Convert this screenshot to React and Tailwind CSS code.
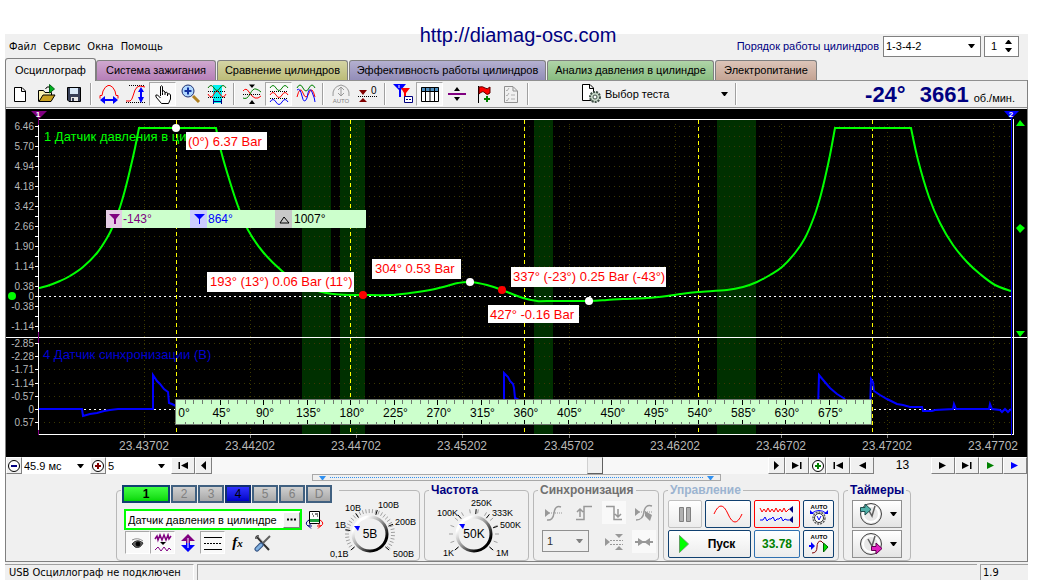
import React from "react";

const menuItems = ["Файл", "Сервис", "Окна", "Помощь"];

const tabs = [
    { title: "Система зажигания", color: "from-[#cfa8cf] to-[#b67fb8] w-[120px]" },
    { title: "Сравнение цилиндров", color: "from-[#d4d4a4] to-[#bcbc78] w-[131px]" },
    { title: "Эффективность работы цилиндров", color: "from-[#b4b0d0] to-[#938db8] w-[197px]" },
    { title: "Анализ давления в цилиндре", color: "from-[#b0d4a8] to-[#88bc80] w-[167px]" },
    { title: "Электропитание", color: "from-[#dcc4b8] to-[#c4a494] w-[102px]" },
];

// plot geometry: one degree of crankshaft is 174 / 180 px, zero is at x = 176
const ZERO_X = 176;
const DEG = 174 / 180;

const pressureTicks = [
    ["6.46", 126], ["5.70", 146], ["4.94", 166], ["4.18", 186], ["3.42", 206], ["2.66", 226],
    ["1.90", 246], ["1.14", 266], ["0.38", 286], ["0", 296], ["-0.38", 306], ["-1.14", 326],
];

const syncTicks = [
    ["-2.85", 343], ["-2.28", 356], ["-1.71", 369], ["-1.14", 383], ["-0.57", 396], ["0", 409], ["0.57", 422],
];

const timeTicks = [
    ["23.43702", 144], ["23.44202", 250], ["23.44702", 356], ["23.45202", 462], ["23.45702", 569],
    ["23.46202", 675], ["23.46702", 781], ["23.47202", 887], ["23.47702", 993],
];

const bands = [[302, 29], [340, 25], [534, 19], [717, 39]];

const pressure = [
    [[39, 288], [47, 286], [60, 281], [70, 276], [83, 267], [97, 253], [107, 238], [113, 226], [120, 207], [125, 190], [130, 170], [135, 148], [139, 128]],
    [[216, 128], [221, 151], [230, 182], [239, 209], [248, 230], [263, 252], [282, 271], [300, 284], [318, 291], [333, 294], [350, 295], [363, 295], [390, 295], [410, 293], [430, 290], [447, 286], [458, 283], [470, 282], [487, 285], [502, 290], [523, 298], [537, 301], [547, 301], [589, 301], [607, 300], [623, 299], [647, 298], [667, 296], [680, 294], [698, 292], [727, 290], [743, 287], [757, 282], [770, 275], [782, 267], [795, 253], [805, 238], [814, 217], [820, 198], [825, 178], [830, 155], [835, 128]],
    [[911, 128], [918, 160], [929, 197], [940, 223], [953, 245], [967, 262], [980, 274], [995, 285], [1011, 291]],
];

const syncSignal =
    "M39 409H82L83 416L90 414L97 413L104 411L110 410L118 409H153V375L157 381L160 384L164 389L168 392L169 403L172 404L176 406" +
    "M504 409V373L508 377L510 381L513 384L514 388L515 398L519 400" +
    "M818 409L819 375L824 381L830 388L837 394L845 399" +
    "M870 409L871 379L873 382L874 391L880 395L887 399L897 404L903 405L910 407H922L923 411H932L935 410L953 409L954 404L956 409H989L990 404L992 409L1000 410L1002 412L1005 409L1008 412L1011 409";

const notes = [
    { x: 186, y: 132, w: 81, h: 18, tx: 188, text: "(0°) 6.37 Bar" },
    { x: 207, y: 272, w: 147, h: 20, tx: 210, text: "193° (13°) 0.06 Bar (11°)" },
    { x: 372, y: 259, w: 89, h: 20, tx: 375, text: "304° 0.53 Bar" },
    { x: 511, y: 267, w: 155, h: 20, tx: 513, text: "337° (-23°) 0.25 Bar (-43°)" },
    { x: 488, y: 305, w: 91, h: 18, tx: 490, text: "427° -0.16 Bar" },
];

const points = [
    [176, 128, "#fff"], [363, 295, "#f00"], [470, 282, "#fff"], [502, 290, "#f00"], [589, 301, "#fff"],
];

// Catmull-Rom through the samples
function smooth(pts) {
    let d = `${pts[0][0]} ${pts[0][1]}`;
    for (let i = 0; i < pts.length - 1; i++) {
        const a = pts[i - 1] || pts[i];
        const b = pts[i];
        const c = pts[i + 1];
        const e = pts[i + 2] || c;
        d += `C${b[0] + (c[0] - a[0]) / 6} ${b[1] + (c[1] - a[1]) / 6} ${c[0] - (e[0] - b[0]) / 6} ${c[1] - (e[1] - b[1]) / 6} ${c[0]} ${c[1]}`;
    }
    return d;
}

function Chart() {
    const rows = [];
    for (let y = 126; y <= 326; y += 10) rows.push(y);
    const degrees = [];
    for (let d = 9; d < 720; d += 9) degrees.push(d);

    return (
        <svg viewBox="6 109 1021 348" className="block w-full bg-black" style={{ fontFamily: '"Liberation Sans", sans-serif' }}>
            {bands.map(([x, w]) => (
                <rect key={x} x={x} y="120" width={w} height="314" fill="#003000" />
            ))}

            <g shapeRendering="crispEdges" strokeDasharray="1 4" stroke="#3c3800">
                {[...rows, ...syncTicks.map(t => t[1])].filter(y => y !== 409 && y !== 296).map(y => (
                    <path key={y} d={`M44 ${y + 0.5}H1011`} />
                ))}
                {timeTicks.map(([label, x]) => (
                    <path key={label} d={`M${x + 0.5} 124V434`} strokeDasharray="1 3" />
                ))}
            </g>

            <text x="44" y="141" fontSize="13" fill="#00ff00">1 Датчик давления в ци</text>
            <text x="43" y="359" fontSize="13" fill="#0000d0">4 Датчик синхронизации (В)</text>

            <g fill="none" shapeRendering="crispEdges">
                <path d="M39 296.5H1011M39 409.5H1011" stroke="#fff" strokeDasharray="2 3" />
                <path d="M176.5 120V434M350.5 120V434M524.5 120V434M698.5 120V434M872.5 120V434" stroke="#ffff00" strokeDasharray="4 3" />
            </g>

            <path
                d={`M${smooth(pressure[0])}L${smooth(pressure[1])}L${smooth(pressure[2])}`}
                fill="none"
                stroke="#00ff00"
                strokeWidth="2"
            />
            <path d={syncSignal} fill="none" stroke="#0000ff" strokeWidth="2" />

            <g shapeRendering="crispEdges" stroke="#fff">
                <path d="M38 119.5H1011M38 434.5H1014M6 337.5H1027M38.5 119V435M1013.5 119V435" />
                <path d={rows.map(y => `M35 ${y + 0.5}h3`).join("") + syncTicks.map(t => `M35 ${t[1] + 0.5}h3`).join("")} />
                <path d={timeTicks.map(t => `M${t[1] + 0.5} 435v3`).join("")} stroke="#808080" />
                <path d="M38.5 117V125M38.5 332V343M38.5 430V435" stroke="#800080" />
                <path d="M1011.5 117V435" stroke="#0000ff" strokeWidth="1" />
            </g>

            <g fontSize="10" fill="#b8b8b8" textAnchor="end">
                {[...pressureTicks, ...syncTicks].map(([label, y]) => (
                    <text key={y} x="34" y={y + 4}>{label}</text>
                ))}
            </g>
            <g fontSize="12" fill="#b8b8b8" textAnchor="middle">
                {timeTicks.map(([label, x]) => (
                    <text key={label} x={x} y="450">{label}</text>
                ))}
            </g>

            {/* cursor flags */}
            <path d="M31 111H47L39 119Z" fill="#800080" />
            <path d="M1004 111H1019L1011 119Z" fill="#0000ff" />
            <g fontSize="8" fontWeight="bold" fill="#fff" textAnchor="middle">
                <text x="38" y="117">1</text>
                <text x="1011" y="117">2</text>
            </g>
            <path d="M1016 126H1025L1020 120ZM1016 331H1025L1020 337ZM1020 224L1025 228L1020 233L1016 228Z" fill="#00ff00" />
            <circle cx="12" cy="296" r="4" fill="#00ff00" />

            {/* cursor values */}
            <g fontSize="12">
                <rect x="106" y="210" width="260" height="18" fill="#ccffcc" />
                <rect x="106" y="210" width="16" height="18" fill="#e4cce4" />
                <rect x="190" y="210" width="17" height="18" fill="#ccccff" />
                <rect x="275" y="210" width="17" height="18" fill="#c8c8c8" />
                <path d="M109 214H120L116 219V224H114V219Z" fill="#800080" />
                <path d="M194 214H205L200 219V224H199V219Z" fill="#0000ff" />
                <path d="M280 223L284 217L289 223Z" fill="none" stroke="#000" />
                <text x="123" y="223" fill="#800080">-143°</text>
                <text x="208" y="223" fill="#0000ff">864°</text>
                <text x="294" y="223" fill="#000">1007°</text>
            </g>

            {/* crank angle ruler */}
            <rect x="175.5" y="399.5" width="696" height="25" fill="#ccffcc" stroke="#707870" />
            <g shapeRendering="crispEdges">
                {degrees.map(d => (
                    <path
                        key={d}
                        d={`M${Math.round(ZERO_X + d * DEG) + 0.5} 400V${d % 45 ? 404 : 405}m0 ${d % 45 ? 18 : 15}V424`}
                        stroke={d % 45 ? "#707870" : "#000"}
                    />
                ))}
            </g>
            <g fontSize="12" textAnchor="middle">
                <text x="184" y="417">0°</text>
                {degrees.filter(d => d % 45 === 0).map(d => (
                    <text key={d} x={ZERO_X + d * DEG + 2} y="417">{d}°</text>
                ))}
            </g>

            {points.map(([x, y, fill]) => (
                <circle key={x} cx={x} cy={y} r="4" fill={fill} />
            ))}
            {notes.map(n => (
                <g key={n.text}>
                    <rect x={n.x} y={n.y} width={n.w} height={n.h} fill="#fff" />
                    <text x={n.tx} y={n.y + 14} fontSize="13" fill="#ff0000">{n.text}</text>
                </g>
            ))}
        </svg>
    );
}

function Icon({ w = 22, h = 22, children }) {
    return (
        <svg width={w} height={h} viewBox={`0 0 ${w} ${h}`} fill="none" stroke="#000" className="shrink-0">
            {children}
        </svg>
    );
}

function ToolButton({ label, pressed, children }) {
    return (
        <button
            aria-label={label}
            className={`flex h-6 w-[27px] shrink-0 items-center justify-center ${
                pressed ? "border border-[#a8a8a8] border-r-white border-b-white bg-[#f9f9f9]" : ""
            }`}
        >
            {children}
        </button>
    );
}

function Separator() {
    return <div className="mx-[3px] h-[22px] w-0.5 shrink-0 border-l border-[#a0a0a0] bg-white" />;
}

function Caret() {
    return (
        <svg width="7" height="4" viewBox="0 0 7 4" className="pointer-events-none shrink-0">
            <path d="M0 0H7L4 4H3Z" fill="currentColor" />
        </svg>
    );
}

const wave = (y, up) => `M2 ${y}q3 ${up} 6 0t6 0t6 0`;

function Toolbar() {
    return (
        <div className="mb-px flex h-7 items-center border-t border-b border-[#909090]">
            <ToolButton label="Новый">
                <Icon>
                    <path d="M5.500 4.500H13L16.500 8V18.500H5.500ZM12.500 4.500V8.500H16.500" fill="#fff" />
                </Icon>
            </ToolButton>
            <ToolButton label="Открыть">
                <Icon>
                    <path d="M2.500 18.500V7.500H7.500L9 9.500H15.500V12" fill="#f8f0b0" />
                    <path d="M3 18.500L7 12H19L15 18.500Z" fill="#c8a020" />
                    <path d="M13.500 1.500V10L18.500 6Z" fill="#00b020" stroke="#006010" />
                    <path d="M9.500 6Q11 3 13 4" />
                </Icon>
            </ToolButton>
            <ToolButton label="Сохранить">
                <Icon>
                    <path d="M4.500 4.500H17.500V18.500H6L4.500 17Z" fill="#384058" />
                    <path d="M7 5H15V11H7Z" fill="#d8e8f8" stroke="none" />
                    <path d="M8 14H15V18H8Z" fill="#e8e8e8" stroke="none" />
                    <path d="M9 15H11V18H9Z" fill="#384058" stroke="none" />
                </Icon>
            </ToolButton>
            <Separator />
            <ToolButton label="Период">
                <Icon>
                    <path d="M2 15.500V12.500H4L5 8Q7 3.500 10 2.500H12Q15 3.500 17 8L18 12.500H20V15.500" stroke="#f00" />
                    <path d="M5 17H17" stroke="#00f" strokeWidth="2" />
                    <path d="M2 17L7 13V21ZM20 17L15 13V21Z" fill="#00f" stroke="none" />
                </Icon>
            </ToolButton>
            <ToolButton label="Амплитуда">
                <Icon>
                    <path d="M4 2.500H20M1 19.500H20" strokeDasharray="1 1" />
                    <path d="M1 18H5Q7 17 8 13L10 7Q12 3 15 3L20 4" stroke="#f00" />
                    <path d="M16 8V16" stroke="#00f" strokeWidth="2" />
                    <path d="M16 4L19 9H13ZM16 20L19 14H13Z" fill="#00f" stroke="none" />
                </Icon>
            </ToolButton>
            <ToolButton label="Рука" pressed>
                <Icon>
                    <path d="M8.500 13V3.500Q9.500 2 10.500 3.500V9.500V8Q12 7 13 9V10Q15 8 15.500 10.500V11Q18 10 18.500 12V16L16.500 20.500H9.500L4 14Q3 11 5.500 12L8.500 15" fill="#fff" />
                    <path d="M10.500 10V12M13 10V12M15.500 11V13" />
                </Icon>
            </ToolButton>
            <ToolButton label="Масштаб">
                <Icon>
                    <path d="M14 13L20 19" stroke="#b08020" strokeWidth="3" />
                    <circle cx="9" cy="8" r="6" fill="#b0d8ff" stroke="#203070" />
                    <path d="M9 4.500V11.500M5.500 8H12.500" stroke="#1030a0" strokeWidth="2" />
                </Icon>
            </ToolButton>
            <ToolButton label="Фрагмент">
                <Icon>
                    <path d="M7 2H16V20H7Z" fill="#00f0f0" stroke="none" />
                    <path d={wave(5, -5)} stroke="#007000" />
                    <path d={wave(11, 6)} stroke="#f00" />
                    <path d="M2 8.500H20M2 14.500H20" strokeDasharray="1 1" />
                    <path d="M7 18.500H15M7.500 16V21M15.500 16V21" stroke="#000080" />
                </Icon>
            </ToolButton>
            <Separator />
            <ToolButton label="Совместить">
                <Icon>
                    <path d="M2 8Q5 4 8 9T14 15T20 13" stroke="#f00" />
                    <path d="M2 15Q6 17 9 11T15 6T20 9" stroke="#008000" />
                    <path d="M2 11.500H20" strokeDasharray="1 1" />
                    <path d="M8 1.500H14L11 5ZM8 21H14L11 17Z" fill="#000" stroke="none" />
                </Icon>
            </ToolButton>
            <ToolButton label="Разделить" pressed>
                <Icon>
                    <path d={wave(5, -5)} stroke="#008000" />
                    <path d={wave(12, -5)} stroke="#f00" />
                    <path d={wave(19, -5)} stroke="#00f" />
                    <path d="M2 8.500H20M2 15.500H20" strokeDasharray="1 1" />
                </Icon>
            </ToolButton>
            <ToolButton label="Наложить">
                <Icon>
                    <path d={wave(5, -6)} stroke="#008000" />
                    <path d="M2 14Q5 2 8 10T14 10T20 14" stroke="#f00" />
                    <path d="M2 7Q5 4 7 13T12 15Q14 2 17 9T20 19" stroke="#00f" />
                </Icon>
            </ToolButton>
            <Separator />
            <ToolButton label="Авто">
                <Icon>
                    <path d="M3 13Q2 4 11 2Q20 4 19 13M11 4V13M8 7L11 4L14 7M8 10L11 13L14 10" stroke="#989898" />
                    <text x="11" y="20" textAnchor="middle" fontSize="6" fontFamily="Liberation Sans" fill="#808080" stroke="none">AUTO</text>
                </Icon>
            </ToolButton>
            <ToolButton label="Ноль">
                <Icon>
                    <path d="M1 13.500H20" strokeDasharray="1 1" />
                    <path d="M2 7H10L6 12ZM2 19H10L6 15Z" fill="#800000" stroke="none" />
                    <text x="14" y="11" fontSize="10" fontFamily="Liberation Sans" fill="#000" stroke="none">0</text>
                </Icon>
            </ToolButton>
            <Separator />
            <ToolButton label="Маркеры">
                <Icon>
                    <path d="M1 1H14L9 7V14H7V7Z" fill="#00f" stroke="none" />
                    <path d="M9 5H18L14 10V16H12V10Z" fill="#f00" stroke="none" />
                    <path d="M12.500 13.500H20.500V19.500H12.500Z" fill="#fff" stroke="#000080" />
                    <path d="M14 16.500H19" stroke="#000080" strokeDasharray="2 1" />
                    <path d="M7 2V5" stroke="#fff" />
                </Icon>
            </ToolButton>
            <ToolButton label="Таблица" pressed>
                <Icon>
                    <path d="M2 4H20V18H2Z" fill="#fff" stroke="none" />
                    <path d="M2 4H20V8H2Z" fill="#5090c0" stroke="none" />
                    <path d="M2.500 4.500H19.500V18.500H2.500ZM2 8.500H20M6.500 5V18M11 5V18M15.500 5V18" />
                </Icon>
            </ToolButton>
            <ToolButton label="Линия">
                <Icon>
                    <path d="M2 11H20" stroke="#800080" strokeWidth="2" />
                    <path d="M8 8H14L11 4ZM8 14H14L11 18Z" fill="#000" stroke="none" />
                </Icon>
            </ToolButton>
            <ToolButton label="Флаг">
                <Icon>
                    <path d="M5.500 3V20" />
                    <path d="M6 4Q10 3 12 5T17 4V10Q14 13 12 10T6 11Z" fill="#f00" stroke="#600000" />
                    <path d="M14 13V19M11 16H17" stroke="#008000" strokeWidth="2" />
                </Icon>
            </ToolButton>
            <ToolButton label="Отчет">
                <Icon>
                    <path d="M4.500 3.500H13L17.500 8V19.500H4.500ZM13 4V8H17" stroke="#909090" />
                    <path d="M6 7L7 8L9 5M6 12L7 13L9 10M6 17L7 18L9 15M11 12H15M11 16H15" stroke="#b0b0b0" />
                </Icon>
            </ToolButton>
            <Separator />

            <button className="ml-12 flex h-6 w-[152px] items-center pr-1 text-[11px]">
                <Icon>
                    <path d="M2.500 1.500H10L13.500 5V17.500H2.500ZM9.500 2V5.500H13" fill="#fff" />
                    <circle cx="15" cy="14" r="5" fill="#c8d8c8" stroke="#405048" strokeDasharray="2 1" strokeWidth="2" />
                    <circle cx="15" cy="14" r="2" fill="#fff" stroke="#405048" />
                </Icon>
                <span className="ml-[3px]">Выбор теста</span>
                <span className="ml-auto">
                    <Caret />
                </span>
            </button>
            <Separator />

            <div className="ml-auto flex items-baseline pr-3 text-[22px] font-bold text-[#000080]">
                <span>-24°</span>
                <span className="ml-3.5">3661</span>
                <span className="ml-[5px] text-[11px] font-normal text-black">об./мин.</span>
            </div>
        </div>
    );
}

function NavButton({ label, width, children }) {
    return (
        <button
            aria-label={label}
            className={`flex h-full shrink-0 items-center justify-center border border-t-white border-l-white border-r-[#808080] border-b-[#808080] bg-[#f0f0f0] ${width}`}
        >
            {children}
        </button>
    );
}

function Arrow({ left, bar, fill = "#000" }) {
    return (
        <svg width="12" height="9" viewBox="0 0 12 9" className={left ? "-scale-x-100" : ""}>
            <path d={bar ? "M1 1L8 4.500L1 8ZM9 1H10.500V8H9Z" : "M2 1L9 4.500L2 8Z"} fill={fill} />
        </svg>
    );
}

function SmallArrow({ left }) {
    return (
        <svg width="5" height="9" viewBox="0 0 5 9" className={left ? "-scale-x-100" : ""}>
            <path d="M0 0L5 4.500L0 9Z" />
        </svg>
    );
}

function RoundSign({ plus, color }) {
    return (
        <Icon w={14} h={14}>
            <circle cx="7" cy="7" r="5.500" fill="#fff" />
            <path d={plus ? "M4 7H10M7 4V10" : "M4 7H10"} stroke={color} strokeWidth="2" />
        </Icon>
    );
}

function NavSelect({ label, value, width }) {
    return (
        <div className={`relative h-full shrink-0 bg-white ${width}`}>
            <select aria-label={label} className="block h-full w-full appearance-none bg-white pl-0.5 text-[11px] leading-4">
                <option>{value}</option>
            </select>
            <span className="pointer-events-none absolute inset-y-0 right-1.5 flex items-center">
                <Caret />
            </span>
        </div>
    );
}

function Navigation() {
    return (
        <div className="flex h-[17px]">
            <NavButton label="Сжать" width="w-4"><RoundSign color="#000080" /></NavButton>
            <NavSelect label="Развертка" value="45.9 мс" width="w-[68px]" />
            <NavButton label="Растянуть" width="w-4"><RoundSign plus color="#800000" /></NavButton>
            <NavSelect label="Масштаб времени" value="5" width="w-[65px]" />
            <NavButton label="В начало" width="w-6"><Arrow left bar /></NavButton>
            <NavButton label="Назад" width="w-[17px]"><SmallArrow left /></NavButton>
            <input
                type="range"
                aria-label="Положение"
                min="0"
                max="1000"
                defaultValue="694"
                className="h-full w-0 flex-1 appearance-none bg-[#f8f8f8] [&::-webkit-slider-thumb]:h-[17px] [&::-webkit-slider-thumb]:w-4 [&::-webkit-slider-thumb]:appearance-none [&::-webkit-slider-thumb]:border [&::-webkit-slider-thumb]:border-t-[#e0e0e0] [&::-webkit-slider-thumb]:border-l-[#d0d0d0] [&::-webkit-slider-thumb]:border-r-[#606060] [&::-webkit-slider-thumb]:border-b-[#606060] [&::-webkit-slider-thumb]:bg-[#f0f0f0]"
            />
            <NavButton label="Вперед" width="w-[17px]"><SmallArrow /></NavButton>
            <NavButton label="В конец" width="w-6"><Arrow bar /></NavButton>
            <NavButton label="Добавить" width="w-[17px]"><RoundSign plus color="#008000" /></NavButton>
            <NavButton label="Первый кадр" width="w-6"><Arrow left bar /></NavButton>
            <NavButton label="Предыдущий кадр" width="w-6"><Arrow left /></NavButton>
            <span className="w-[57px] text-center text-[12px] leading-[17px]">13</span>
            <NavButton label="Следующий кадр" width="w-6"><Arrow /></NavButton>
            <NavButton label="Последний кадр" width="w-6"><Arrow bar /></NavButton>
            <NavButton label="Воспроизвести" width="w-6"><Arrow fill="#008000" /></NavButton>
            <NavButton label="Далее" width="w-6"><Arrow fill="#0000ff" /></NavButton>
        </div>
    );
}

function Knob({ w, h, cx, cy, value, labels, marker, scaleTicks, className = "" }) {
    const ticks = [];
    for (let a = -130; a <= 130; a += scaleTicks) {
        const r = (a * Math.PI) / 180;
        ticks.push(`M${cx + 21 * Math.sin(r)} ${cy - 21 * Math.cos(r)}L${cx + 25 * Math.sin(r)} ${cy - 25 * Math.cos(r)}`);
    }
    return (
        <svg
            width={w}
            height={h}
            viewBox={`0 0 ${w} ${h}`}
            className={`pointer-events-none block shrink-0 ${className}`}
            style={{ fontFamily: '"Liberation Sans", sans-serif' }}
        >
            <defs>
                <linearGradient id={`rim${cx}`} x1="0" y1="0" x2="1" y2="1">
                    <stop offset="0.200" stopColor="#ffffff" />
                    <stop offset="0.500" stopColor="#909090" />
                    <stop offset="0.800" stopColor="#000000" />
                </linearGradient>
            </defs>
            <path d={ticks.join("")} stroke="#a0a0a0" />
            {labels.map(([text, x, y, a]) => {
                const r = (a * Math.PI) / 180;
                return (
                    <g key={text}>
                        <path
                            d={`M${cx + 20 * Math.sin(r)} ${cy - 20 * Math.cos(r)}L${cx + 25 * Math.sin(r)} ${cy - 25 * Math.cos(r)}`}
                            stroke="#000"
                        />
                        <text x={x} y={y} fontSize="9">{text}</text>
                    </g>
                );
            })}
            <circle cx={cx} cy={cy} r="17" fill="#f0f0f0" stroke={`url(#rim${cx})`} strokeWidth="3" />
            <path d="M-3 -2H3L1 3Z" fill="#0000ff" transform={`translate(${marker[0]} ${marker[1]})`} />
            <text x={cx} y={cy + 4} fontSize="12" textAnchor="middle">{value}</text>
        </svg>
    );
}

function Group({ title, color = "text-[#000080]", className = "", children }) {
    return (
        <fieldset className={`h-[77px] shrink-0 rounded-[4px] border border-[#b8b8b8] ${className}`}>
            <legend className={`ml-1 h-3 px-0.5 text-[12px] leading-3 font-bold ${color}`}>{title}</legend>
            {children}
        </fieldset>
    );
}

const channels = ["2", "3", "4", "5", "6", "D"];

function FlatButton({ label, pressed, children }) {
    return (
        <button
            aria-label={label}
            className={`flex h-[23px] w-[25px] items-center justify-center ${
                pressed ? "border border-[#a8a8a8] border-r-white border-b-white bg-[#f9f9f9]" : ""
            }`}
        >
            {children}
        </button>
    );
}

function ChannelGroup() {
    return (
        <div className="mt-1.5 flex h-[71px] w-[304px] shrink-0 rounded-[4px] border border-[#b8b8b8]">
            <div className="-mt-[7px] pl-1">
                <div className="flex h-5 w-[218px] gap-px bg-[#f0f0f0] pt-px pl-px text-[12px]">
                    <button className="h-[18px] w-12 border-2 border-[#104070] bg-linear-to-b from-[#40ff40] to-[#00d800] leading-3 font-bold">1</button>
                    {channels.map(c => (
                        <button
                            key={c}
                            className={`h-[18px] w-[26px] border-2 leading-3 ${
                                c === "4"
                                    ? "border-[#103070] bg-linear-to-b from-[#3030ff] to-[#0000c8] text-black"
                                    : "border-[#406080] bg-linear-to-b from-[#d0d0d0] to-[#a8a8a8] text-[#808080]"
                            }`}
                        >
                            {c}
                        </button>
                    ))}
                </div>
                <div className="mt-[5px] ml-[3px] flex items-center">
                    <div className="flex h-[21px] w-[178px] items-center border-2 border-[#00ff00] bg-white">
                        <input
                            aria-label="Название канала"
                            defaultValue="Датчик давления в цилиндре"
                            className="h-full w-0 flex-1 pl-0.5 text-[11px] outline-none"
                        />
                        <button aria-label="Выбрать" className="flex h-4 w-[17px] items-center justify-center gap-0.5 border border-t-white border-l-white border-r-[#808080] border-b-[#808080] bg-[#f0f0f0]">
                            <Icon w={9} h={3}><path d="M0 1.500H2M3.500 1.500H5.500M7 1.500H9" strokeWidth="2" /></Icon>
                        </button>
                    </div>
                    <button aria-label="Прибор" className="ml-[3px]">
                        <Icon w={19} h={20}>
                            <path d="M4.500 1.500H14.500V13.500H4.500Z" fill="#fff" />
                            <path d="M5 9H14V12H5Z" fill="#20a040" stroke="none" />
                            <path d="M7 4H8M10 4H13M8 6H9M12 6H13" />
                            <path d="M4 10Q-1 13 3 16H7M6 13.500L3.500 16L6 18.500" stroke="#000080" />
                            <path d="M15 10Q20 13 16 16H12M13 13.500L15.500 16L13 18.500" stroke="#f00" />
                        </Icon>
                    </button>
                </div>
                <div className="mt-px ml-1 flex">
                    <FlatButton label="Видимость" pressed>
                        <Icon w={20} h={20}>
                            <path d="M4 11Q9 5 15 10Q12 16 7 14Z" fill="#606060" stroke="#303030" />
                            <circle cx="10" cy="11" r="2" fill="#000" />
                            <path d="M4 7Q10 4 15 8" stroke="#909090" />
                        </Icon>
                    </FlatButton>
                    <FlatButton label="Фильтр" pressed>
                        <Icon w={20} h={20}>
                            <path d="M2 6L4 3L5 7L7 2L9 7L11 2L13 7L15 2L16 6L18 3" stroke="#800080" strokeWidth="1.500" />
                            <path d="M7 9H13L10 12Z" fill="#000" stroke="none" />
                            <path d="M2 17L5 14L8 18L11 14L14 18L16 15L18 17" stroke="#800080" />
                        </Icon>
                    </FlatButton>
                    <FlatButton label="Сдвиг">
                        <Icon w={20} h={20}>
                            <path d="M10 1L17 8H12V10H8V8H3Z" fill="#800080" stroke="none" />
                            <path d="M10 19L17 12H12V10H8V12H3Z" fill="#0000ff" stroke="none" />
                            <path d="M10 5V15" stroke="#fff" />
                        </Icon>
                    </FlatButton>
                    <FlatButton label="Границы" pressed>
                        <Icon w={20} h={20}>
                            <path d="M1 4.500H19M1 16.500H19" />
                            <path d="M1 10.500H19" strokeDasharray="2 1" />
                        </Icon>
                    </FlatButton>
                    <FlatButton label="Функция">
                        <span className="font-['Liberation_Serif'] text-[15px] leading-4 font-bold italic">
                            f<span className="text-[11px]">x</span>
                        </span>
                    </FlatButton>
                    <FlatButton label="Настройка">
                        <Icon w={20} h={20}>
                            <path d="M4 4L16 17" strokeWidth="2" stroke="#303030" />
                            <path d="M5 3L16 15" stroke="#d0d0d0" />
                            <path d="M17 3L9 11" stroke="#606060" strokeWidth="2" />
                            <path d="M3 6Q2 2 6 3" />
                            <path d="M8 12L4 16" stroke="#305080" strokeWidth="5" strokeLinecap="round" />
                            <path d="M8 12L4 16" stroke="#80b0e0" strokeWidth="3" strokeLinecap="round" />
                        </Icon>
                    </FlatButton>
                </div>
            </div>
            <Knob
                className="-ml-[11px]"
                w={91}
                h={69}
                cx={42}
                cy={43}
                value="5В"
                marker={[29, 37]}
                scaleTicks={8}
                labels={[["0,1В", 2, 66, -130], ["1В", 7, 37, -80], ["10В", 17, 20, -35], ["100В", 50, 17, 17], ["200В", 67, 34, 67], ["500В", 65, 66, 130]]}
            />
        </div>
    );
}

function GrayButton({ label, pressed, children }) {
    return (
        <button aria-label={label} disabled className={`flex h-[23px] w-6 items-center justify-center ${pressed ? "bg-[#f9f9f9]" : ""}`}>
            <svg width="20" height="20" viewBox="0 0 20 20" fill="none" stroke="#989898">{children}</svg>
        </button>
    );
}

function SyncGroup() {
    return (
        <Group title="Синхронизация" color="text-[#707070]" className="w-[126px]">
            <div className="grid grid-cols-4 gap-x-1 gap-y-1.5 pt-[5px] pl-2">
                <GrayButton label="Уровень">
                    <path d="M5 10H18" strokeDasharray="1 1" />
                    <path d="M1 6L6 10L1 14Z" fill="#989898" stroke="none" />
                    <path d="M3 17Q9 18 10 10T17 4" strokeWidth="1.500" />
                </GrayButton>
                <GrayButton label="Фронт">
                    <path d="M2 16.500H10V3.500H18M6 14V6M3 9L6 6L9 9" strokeWidth="1.500" />
                </GrayButton>
                <GrayButton label="Спад" pressed>
                    <path d="M2 3.500H10V16.500H18M14 6V14M11 11L14 14L17 11" strokeWidth="1.500" />
                </GrayButton>
                <GrayButton label="Ручная">
                    <path d="M1 5L6 9L1 13ZM11 8L18 12L16 18L11 13Z" fill="#989898" stroke="none" />
                    <path d="M5 9H18" strokeDasharray="1 1" />
                    <path d="M2 17Q9 17 10 9T18 3" strokeWidth="1.500" />
                </GrayButton>
                <div className="relative col-span-2 h-[22px] w-[47px] text-[#808080]">
                    <select aria-label="Канал синхронизации" disabled className="block h-full w-full appearance-none border border-[#909090] pl-1 text-[11px] text-[#303030] opacity-100">
                        <option>1</option>
                    </select>
                    <span className="pointer-events-none absolute inset-y-0 right-1.5 flex items-center"><Caret /></span>
                </div>
                <GrayButton label="Окно">
                    <path d="M1 6L6 10L1 14ZM11 2H19L15 6ZM11 18H19L15 14Z" fill="#989898" stroke="none" />
                    <path d="M6 8.500H19M6 12.500H19" strokeDasharray="2 1" />
                </GrayButton>
                <GrayButton label="К центру" pressed>
                    <path d="M1 10H19" strokeWidth="2" />
                    <path d="M4 6L10 10L4 14ZM16 6L10 10L16 14Z" fill="#989898" stroke="none" />
                </GrayButton>
            </div>
        </Group>
    );
}

function ControlGroup() {
    const frame = "flex h-7 items-center justify-center rounded-[2px] border bg-linear-to-b from-white to-[#ececec]";
    return (
        <Group title="Управление" color="text-[#9cb4d0]" className="w-[176px]">
            <div className="grid grid-cols-[34px_46px_46px_31px] gap-x-[3px] gap-y-0.5 pt-1 pl-1">
                <button aria-label="Пауза" disabled className={`${frame} border-[#c0c0c0]`}>
                    <Icon w={14} h={18}>
                        <path d="M1.500 2.500H5.500V16.500H1.500ZM8.500 2.500H12.500V16.500H8.500Z" fill="#b0b0b0" stroke="#808080" />
                    </Icon>
                </button>
                <button aria-label="Сигнал" className={`${frame} border-[#104070]`}>
                    <Icon w={30} h={20}>
                        <path d="M1 10Q8 -6 15 10T29 10" stroke="#f00" />
                    </Icon>
                </button>
                <button aria-label="Запись" className={`${frame} border-[#ff0000]`}>
                    <Icon w={36} h={22}>
                        <path d="M1 5L3 9L5 6L7 9L9 5L11 9L13 6L15 9L17 5L19 9L21 6L23 9L25 5L27 9L30 6" stroke="#f00" />
                        <path d="M1 17H4L6 14L8 18L10 16H12L14 14L16 18L18 16H20L22 14L24 18L26 16L28 17H30" stroke="#00f" />
                        <path d="M34 3V10L30 6ZM34 13V20L30 17Z" fill="#000080" stroke="none" />
                    </Icon>
                </button>
                <button aria-label="Автонапряжение" className={`${frame} border-[#104070]`}>
                    <Icon w={26} h={24}>
                        <text x="13" y="7" fontSize="6" fontWeight="bold" fontFamily="Liberation Sans" textAnchor="middle" fill="#000" stroke="none">AUTO</text>
                        <path d="M6 11Q13 6 20 11" stroke="#00f" />
                        <path d="M4 8V12H8ZM22 8V12H18Z" fill="#00f" stroke="none" />
                        <circle cx="13" cy="16" r="6" strokeWidth="1.500" strokeDasharray="2 1" stroke="#606060" />
                        <circle cx="13" cy="16" r="4.500" fill="#fff" stroke="#303030" />
                        <path d="M11 14L13 18L15 14" stroke="#00f" />
                    </Icon>
                </button>
                <button className={`${frame} col-span-2 gap-[18px] border-[#104070] pr-1.5 text-[12px] font-bold`}>
                    <Icon w={12} h={20}>
                        <path d="M1.500 1.500V18.500L10.500 10Z" fill="#00ff00" stroke="#60a060" />
                    </Icon>
                    Пуск
                </button>
                <button className={`${frame} border-[#3070b0] text-[12px] font-bold text-[#008000]`}>33.78</button>
                <button aria-label="Автозапуск" className={`${frame} border-[#104070]`}>
                    <Icon w={26} h={24}>
                        <text x="13" y="7" fontSize="6" fontWeight="bold" fontFamily="Liberation Sans" textAnchor="middle" fill="#000" stroke="none">AUTO</text>
                        <path d="M3 14H6" stroke="#00f" strokeWidth="2" />
                        <path d="M5 10L9 14L5 18Z" fill="#00f" stroke="none" />
                        <path d="M6 21Q11 21 11 15T15 9L17 11" stroke="#800000" />
                        <path d="M17.500 11V20L22 15Z" fill="#00e000" stroke="#006000" />
                    </Icon>
                </button>
            </div>
        </Group>
    );
}

function TimerButton({ label, children }) {
    return (
        <button
            aria-label={label}
            className="flex h-7 w-[50px] items-center justify-center gap-1.5 border border-[#909090] bg-linear-to-b from-white to-[#e4e4e4]"
        >
            <Icon w={26} h={26}>
                <circle cx="13" cy="13" r="10.500" fill="#e8e8e8" stroke="#404040" />
                <circle cx="13" cy="13" r="8" stroke="#fff" strokeWidth="2" />
                <path d="M10 8L14 15L17 5" strokeWidth="1.500" stroke="#606060" />
                {children}
            </Icon>
            <Caret />
        </button>
    );
}

export default function App() {
    return (
        <div className="min-h-screen bg-white font-['Liberation_Sans',sans-serif] text-[11px] text-black">
            <header className="relative h-[34px]">
                <a href="http://diamag-osc.com" className="absolute inset-x-0 top-[23px] mx-auto w-fit pr-1 text-[20px] leading-6 text-[#000080]">
                    http://diamag-osc.com
                </a>
            </header>

            <main className="mr-3 ml-[5px] bg-[#f0f0f0]">
                <div className="flex h-6 items-center">
                    <nav className="flex gap-[7px] pt-0.5 pl-1 font-['DejaVu_Sans_Condensed','DejaVu_Sans',sans-serif]">
                        {menuItems.map(item => (
                            <button key={item}>{item}</button>
                        ))}
                    </nav>
                    <label htmlFor="order" className="mr-1 ml-auto text-[#000080]">Порядок работы цилиндров</label>
                    <div className="relative h-[21px] w-[98px]">
                        <select id="order" className="block h-full w-full appearance-none border border-[#808080] bg-white pl-0.5 leading-4">
                            <option>1-3-4-2</option>
                        </select>
                        <span className="pointer-events-none absolute inset-y-0 right-1.5 flex items-center"><Caret /></span>
                    </div>
                    <div className="mr-[9px] ml-[3px] flex h-[21px] w-[35px] items-center border border-[#808080] bg-white">
                        <input aria-label="Цилиндр" defaultValue="1" className="w-0 flex-1 pl-1.5 outline-none" />
                        <div className="flex flex-col gap-1 pr-1.5">
                            <button aria-label="Больше" className="rotate-180"><Caret /></button>
                            <button aria-label="Меньше"><Caret /></button>
                        </div>
                    </div>
                </div>

                <div className="flex h-[22px] items-end">
                    <button className="relative z-10 -mb-px h-[23px] w-[91px] rounded-t-[3px] border border-b-0 border-[#808080] bg-[#f0f0f0]">
                        Осциллограф
                    </button>
                    {tabs.map(tab => (
                        <button
                            key={tab.title}
                            className={`mr-px h-5 rounded-t-[3px] border border-b-0 border-[#808080] bg-linear-to-b whitespace-nowrap ${tab.color}`}
                        >
                            {tab.title}
                        </button>
                    ))}
                </div>

                <div className="border-r border-b border-l border-[#808080]">
                    <Toolbar />
                    <Chart />
                    <Navigation />

                    <div className="mx-auto flex h-[7px] w-2/5 items-center gap-1 border border-[#a8a8a8] px-1.5 text-[#3090f0]">
                        <Caret />
                        <div className="flex-1 border-t border-dotted border-[#3090f0]" />
                        <Caret />
                    </div>

                    <div className="flex gap-1 pt-[3px] pl-[110px]">
                        <ChannelGroup />
                        <Group title="Частота" className="w-[105px]">
                            <Knob
                                w={100}
                                h={64}
                                cx={49}
                                cy={38}
                                value="50K"
                                marker={[37, 30]}
                                scaleTicks={20}
                                labels={[["100K", 12, 20, -40], ["250K", 46, 10, 5], ["333K", 67, 20, 38], ["500K", 75, 32, 72], ["1K", 18, 60, -130], ["1M", 71, 60, 130]]}
                            />
                        </Group>
                        <SyncGroup />
                        <ControlGroup />
                        <Group title="Таймеры" className="w-[68px]">
                            <div className="flex flex-col gap-0.5 pt-1 pl-2">
                                <TimerButton label="Таймер запуска">
                                    <path d="M2.500 6.500H7V3L13 8.500L7 14V10.500H2.500Z" fill="#50b0a8" stroke="#205050" />
                                </TimerButton>
                                <TimerButton label="Таймер остановки">
                                    <path d="M13.500 15.500H18V12L24 17.500L18 23V19.500H13.500Z" fill="#e020c0" stroke="#600050" />
                                </TimerButton>
                            </div>
                        </Group>
                    </div>
                </div>

                <footer className="flex h-[18px] gap-[3px] pt-0.5 font-['DejaVu_Sans_Condensed','DejaVu_Sans',sans-serif] leading-4">
                    <div className="w-[189px] border-t border-r border-[#a0a0a0] border-r-white pl-1">USB Осциллограф не подключен</div>
                    <div className="flex-1 border-t border-l border-[#a0a0a0]" />
                    <div className="w-12 border-t border-l border-[#a0a0a0] pl-0.5">1.9</div>
                </footer>
            </main>
        </div>
    );
}
